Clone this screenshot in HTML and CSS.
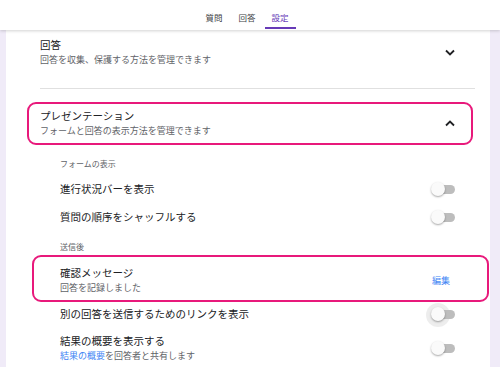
FILE: index.html
```html
<!DOCTYPE html>
<html lang="ja">
<head>
    <meta charset="UTF-8">
    <meta name="viewport" content="width=device-width, initial-scale=1.0">
    <title>設定</title>
    <link rel="stylesheet" href="styles.css">
</head>
<body>
    <!-- Tabs -->
    <header class="topbar">
        <nav class="tabs">
            <a class="tab">質問</a>
            <a class="tab">回答</a>
            <a class="tab active">設定</a>
        </nav>
    </header>

    <main class="page">
        <div class="card">
            <!-- 回答 -->
            <div class="section-head plain">
                <div>
                    <div class="title">回答</div>
                    <div class="desc">回答を収集、保護する方法を管理できます</div>
                </div>
                <svg class="chev" width="10" height="7" viewBox="0 0 10 7"><path d="M1 1.5l4 4 4-4" fill="none" stroke="#202124" stroke-width="1.8"/></svg>
            </div>
            <div class="divider"></div>

            <!-- プレゼンテーション -->
            <div class="section-head highlight head-mark">
                <div>
                    <div class="title">プレゼンテーション</div>
                    <div class="desc">フォームと回答の表示方法を管理できます</div>
                </div>
                <svg class="chev" width="10" height="7" viewBox="0 0 10 7"><path d="M1 5.5l4-4 4 4" fill="none" stroke="#202124" stroke-width="1.8"/></svg>
            </div>

            <div class="sub">
                <div class="label first">フォームの表示</div>
                <div class="row">
                    <span class="item">進行状況バーを表示</span>
                    <span class="toggle"><span class="track"></span><span class="thumb"></span></span>
                </div>
                <div class="row">
                    <span class="item">質問の順序をシャッフルする</span>
                    <span class="toggle"><span class="track"></span><span class="thumb"></span></span>
                </div>

                <div class="label">送信後</div>
                <div class="row highlight confirm">
                    <div>
                        <div class="item">確認メッセージ</div>
                        <div class="desc">回答を記録しました</div>
                    </div>
                    <a class="edit">編集</a>
                </div>
                <div class="row short">
                    <span class="item">別の回答を送信するためのリンクを表示</span>
                    <span class="toggle focused"><span class="track"></span><span class="thumb"></span></span>
                </div>
                <div class="row tall">
                    <div>
                        <div class="item">結果の概要を表示する</div>
                        <div class="desc"><a class="link">結果の概要</a>を回答者と共有します</div>
                    </div>
                    <span class="toggle"><span class="track"></span><span class="thumb"></span></span>
                </div>
            </div>
        </div>
    </main>
</body>
</html>
```

FILE: styles.css
```css
* {
    margin: 0;
    padding: 0;
    box-sizing: border-box;
}

body {
    font-family: "Noto Sans CJK JP", "Noto Sans", sans-serif;
    color: #202124;
    background: #f0ebf8;
    height: 367px;
    overflow: hidden;
}

.topbar {
    position: relative;
    z-index: 2;
    height: 30px;
    background: #fff;
    box-shadow: 0 1px 3px rgba(0, 0, 0, 0.18);
    display: flex;
    justify-content: center;
}

.tabs {
    display: flex;
    gap: 2px;
    padding-right: 6px;
}

.tab {
    font-size: 8.5px;
    line-height: 12px;
    padding: 11px 7px 4px;
    height: 29px;
    border-bottom: 2px solid transparent;
    color: #3c4043;
}

.tab.active {
    color: #673ab7;
    border-bottom-color: #673ab7;
}

.page {
    padding: 0 10px 0 6px;
}

.card {
    background: #fff;
    height: 337px;
    padding: 0 15px 0 34px;
}

.section-head {
    display: flex;
    justify-content: space-between;
    align-items: center;
}

.section-head.plain {
    padding: 7px 20px 21px 0;
}

.title {
    font-size: 10.5px;
    line-height: 16px;
}

.desc {
    font-size: 9px;
    line-height: 14px;
    color: #5f6368;
}

.divider {
    height: 1px;
    background: #e0e0e0;
}

.highlight {
    border: 2px solid #e8197b;
    border-radius: 9px;
}

.head-mark {
    margin: 13px 2px 0 -13px;
    padding: 4px 16px 5px 11px;
}

.sub {
    padding-left: 20px;
}

.label {
    font-size: 8px;
    line-height: 12px;
    color: #5f6368;
    margin-top: 10px;
}

.label.first {
    margin-top: 13px;
    margin-bottom: 5px;
}

.row {
    display: flex;
    justify-content: space-between;
    align-items: center;
    height: 28px;
    padding-right: 20px;
}

.row.short {
    height: 24px;
}

.row.tall {
    height: 37px;
    padding-top: 7px;
}

.item {
    font-size: 10.5px;
    line-height: 16px;
}

.confirm {
    height: auto;
    margin: 2px -14px 0 -28px;
    padding: 8px 37px 5px 26px;
}

.edit {
    font-size: 9px;
    color: #4285f4;
}

.link {
    color: #4285f4;
}

.toggle {
    position: relative;
    width: 24px;
    height: 14px;
}

.track {
    position: absolute;
    left: 4px;
    right: 0;
    top: 3px;
    height: 9px;
    border-radius: 5px;
    background: #bdbdbd;
}

.thumb {
    position: absolute;
    left: 0;
    top: 0;
    width: 14px;
    height: 14px;
    border-radius: 50%;
    background: #fafafa;
    box-shadow: 0 1px 2px rgba(0, 0, 0, 0.35);
}

.focused::before {
    content: "";
    position: absolute;
    left: -5px;
    top: -4px;
    width: 24px;
    height: 24px;
    border-radius: 50%;
    background: rgba(0, 0, 0, 0.07);
}
```
